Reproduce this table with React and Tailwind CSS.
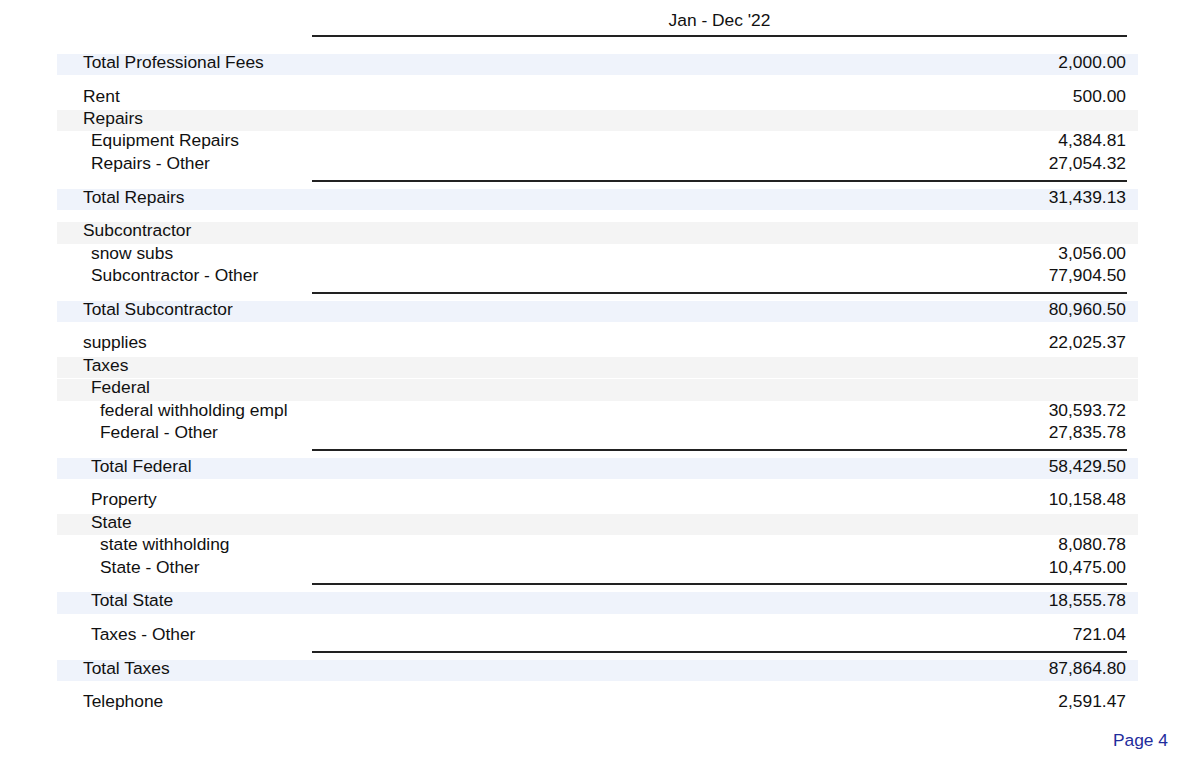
import React from 'react';

const rows = [
  { label: 'Total Professional Fees', amount: '2,000.00', level: 0, type: 'total', after: true },
  { label: 'Rent', amount: '500.00', level: 0 },
  { label: 'Repairs', level: 0, type: 'group' },
  { label: 'Equipment Repairs', amount: '4,384.81', level: 1 },
  { label: 'Repairs - Other', amount: '27,054.32', level: 1 },
  { label: 'Total Repairs', amount: '31,439.13', level: 0, type: 'total', line: true, after: true },
  { label: 'Subcontractor', level: 0, type: 'group' },
  { label: 'snow subs', amount: '3,056.00', level: 1 },
  { label: 'Subcontractor - Other', amount: '77,904.50', level: 1 },
  { label: 'Total Subcontractor', amount: '80,960.50', level: 0, type: 'total', line: true, after: true },
  { label: 'supplies', amount: '22,025.37', level: 0 },
  { label: 'Taxes', level: 0, type: 'group' },
  { label: 'Federal', level: 1, type: 'group' },
  { label: 'federal withholding empl', amount: '30,593.72', level: 2 },
  { label: 'Federal - Other', amount: '27,835.78', level: 2 },
  { label: 'Total Federal', amount: '58,429.50', level: 1, type: 'total', line: true, after: true },
  { label: 'Property', amount: '10,158.48', level: 1 },
  { label: 'State', level: 1, type: 'group' },
  { label: 'state withholding', amount: '8,080.78', level: 2 },
  { label: 'State - Other', amount: '10,475.00', level: 2 },
  { label: 'Total State', amount: '18,555.78', level: 1, type: 'total', line: true, after: true },
  { label: 'Taxes - Other', amount: '721.04', level: 1 },
  { label: 'Total Taxes', amount: '87,864.80', level: 0, type: 'total', line: true, after: true },
  { label: 'Telephone', amount: '2,591.47', level: 0 },
];

const indent = ['pl-[26px]', 'pl-[34px]', 'pl-[43px]'];

const Rule = () => (
  <div className="h-[11.3px] pt-[2.3px]">
    <div className="h-[2px] bg-[#222] ml-[255px] mr-[11px]" />
  </div>
);

const Row = ({ row }) => {
  const bg =
    row.type === 'total' ? 'bg-[#eff3fb]' : row.type === 'group' ? 'bg-[#f4f4f4]' : '';
  return (
    <div className={`h-[22.4px] flex justify-between border-b border-white leading-[16px] pr-[12px] ${bg} ${indent[row.level]}`}>
      <span>{row.label}</span>
      {row.amount && <span>{row.amount}</span>}
    </div>
  );
};

export default function App() {
  return (
    <div className="w-[1200px] h-[779px] bg-white text-[#111] text-[17.4px] overflow-hidden" style={{ fontFamily: '"Liberation Sans", Arial, sans-serif' }}>
      {/* Column header */}
      <div className="pt-[12px] ml-[312px] w-[815px]">
        <div className="text-center leading-[16px] h-[23px]">Jan - Dec '22</div>
        <div className="h-[2px] bg-[#222]" />
      </div>

      <div className="ml-[57px] w-[1081px] mt-[17px]">
        {rows.map((row) => (
          <React.Fragment key={row.label}>
            {row.line && <Rule />}
            <Row row={row} />
            {row.after && <div className="h-[11.3px]" />}
          </React.Fragment>
        ))}
      </div>

      <div className="flex justify-end pr-[32px] mt-[16px]">
        <span className="text-[#1f2d9c] leading-[16px]">Page 4</span>
      </div>
    </div>
  );
}
